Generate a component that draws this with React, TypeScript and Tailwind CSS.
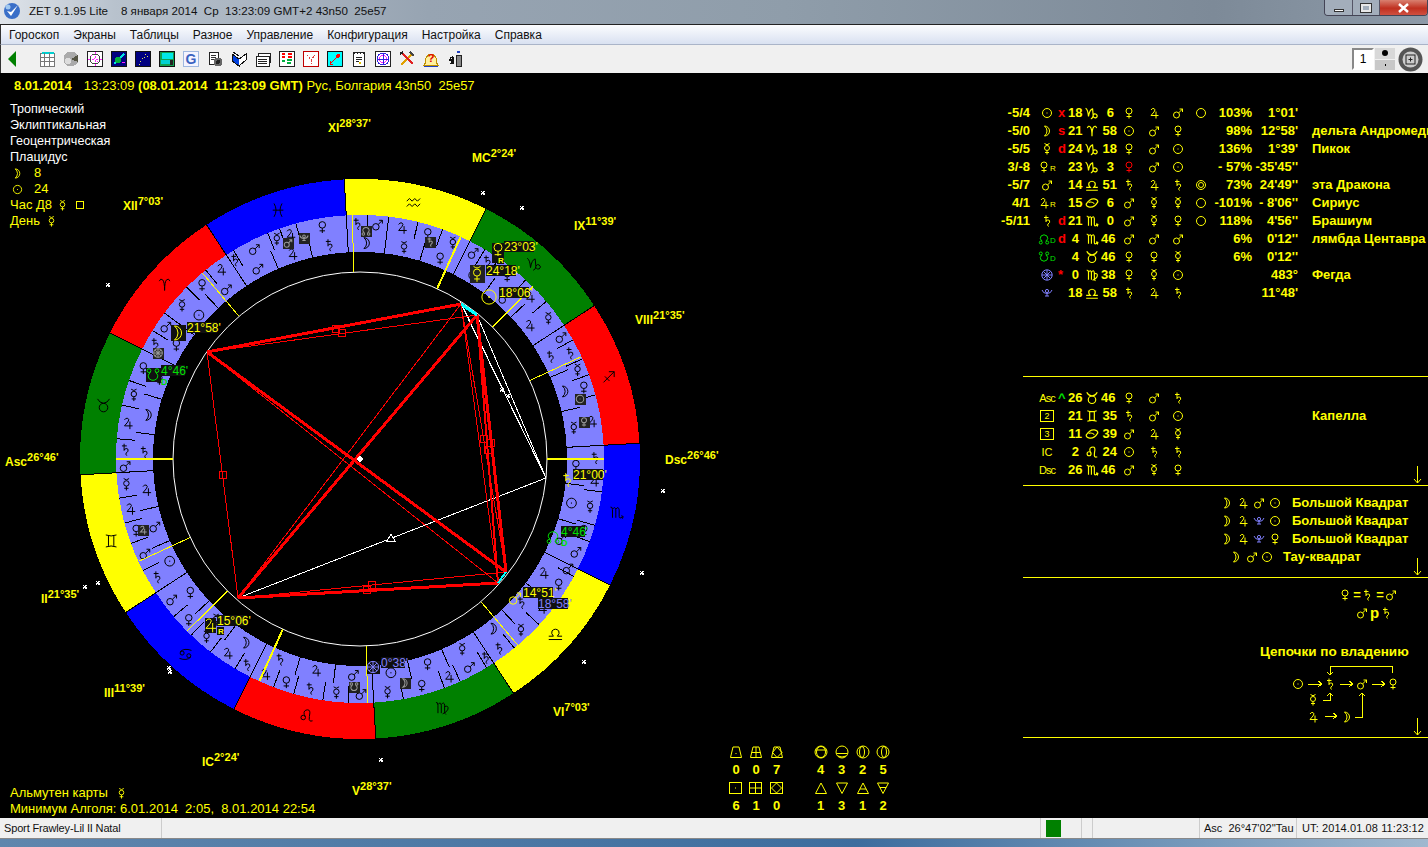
import type { ReactNode } from "react";

// Стилизованные символы планет и знаков (viewBox 12x12)
const PATHS: Record<string, ReactNode> = {
  sun: <><circle cx="6" cy="6" r="4.5" /><rect x="5.5" y="5.5" width="1" height="1" fill="currentColor" stroke="none" /></>,
  moon: <path d="M3.5 1 A5 5 0 0 1 3.5 11 A6.5 6.5 0 0 0 6 6 A6.5 6.5 0 0 0 3.5 1Z" />,
  mer: <><circle cx="6" cy="5" r="2.5" /><path d="M3.5 .5Q6 3 8.5 .5M6 7.5V11.5M4 9.5H8" /></>,
  ven: <><circle cx="6" cy="4" r="3" /><path d="M6 7V11.5M3.5 9.5H8.5" /></>,
  mar: <><circle cx="4.5" cy="8" r="3" /><path d="M6.7 5.8L10.5 2M7.5 2H10.5V5" /></>,
  jup: <path d="M3 3Q4 1 6 1.5Q8 2.5 6 5L3 8.5H10.5M8 4.5V11.5" />,
  sat: <path d="M5 .5V7M3 2.5H7.5M5 6Q7 4 8.5 5.5Q9.5 7.5 7 9Q6 10 7.5 11.5" />,
  nn: <><path d="M4 8Q1 6 3 3Q6 .5 9 3Q11 6 8 8" /><circle cx="2.8" cy="9.5" r="1.5" /><circle cx="9.2" cy="9.5" r="1.5" /></>,
  sn: <><path d="M4 4Q1 6 3 9Q6 11.5 9 9Q11 6 8 4" /><circle cx="2.8" cy="2.5" r="1.5" /><circle cx="9.2" cy="2.5" r="1.5" /></>,
  lil: <><circle cx="6" cy="4" r="1.6" /><path d="M1 3Q2 6.5 6 6.5Q10 6.5 11 3M6 6.5V9M4 9H8" /></>,
  for: <><circle cx="6" cy="6" r="5.2" /><path d="M2.4 2.4L9.6 9.6M9.6 2.4L2.4 9.6M6 1V11M1 6H11" /></>,
  ari: <path d="M2 3.5Q3 1 4.5 2.5Q6 4 6 10.5Q6 4 7.5 2.5Q9 1 10 3.5" />,
  tau: <><circle cx="6" cy="7.5" r="3.2" /><path d="M1.5 1Q3 4 6 4.3Q9 4 10.5 1" /></>,
  gem: <path d="M2 1.5Q6 3 10 1.5M2 10.5Q6 9 10 10.5M4 2.3V9.7M8 2.3V9.7" />,
  can: <><path d="M2 4Q5 1 10.5 3M10 8Q7 11 1.5 9" /><circle cx="3.5" cy="5" r="1.5" /><circle cx="8.5" cy="7" r="1.5" /></>,
  eye: <><path d="M1 7Q4 2 8 2.500Q11 3 11 5Q8 10 4 9.500Q1 9 1 7Z" /><path d="M3 5.500Q6 4.500 8 6.500" /></>,
  leo: <><circle cx="3.5" cy="7.5" r="1.7" /><path d="M5 7Q3 3 5.5 2Q8.5 1 8.5 4Q8 7 8 9Q8.5 11 10.5 10" /></>,
  vir: <path d="M1.5 2Q3 1.5 3 4V10M3 3.5Q5 1 5.5 4V10M5.5 3.5Q7.5 1 8 4V9Q8 10.5 9 11M8 5Q11 4 10.5 7Q10 9 6.5 10.5" />,
  lib: <path d="M1 10.5H11M1 8H4.5Q2.5 6 3.5 4Q6 1.5 8.5 4Q9.5 6 7.5 8H11" />,
  sco: <path d="M1.5 2Q3 1.5 3 4V10M3 3.5Q5 1 5.5 4V10M5.5 3.5Q7.5 1 8 4V9Q8 11 10.5 9.5M9.5 8.5L11 9L10.5 10.7" />,
  sag: <path d="M2 10L10 2M6 2H10V6M3 5.5L6.5 9" />,
  cap: <path d="M.5 2Q2.500 3 3 9Q4 3 6.500 2.500L7 8Q7 10.500 5 11M7 8Q8 6 9.500 7Q11.500 8.500 9.500 10Q8 10.500 7 9" />,
  aqu: <path d="M1 5L3 3L5 5L7 3L9 5L11 3M1 9L3 7L5 9L7 7L9 9L11 7" />,
  pis: <path d="M3 1Q6 6 3 11M9 1Q6 6 9 11M2 6H10" />,
};

const SIGNS = ["ari", "tau", "gem", "can", "leo", "vir", "lib", "sco", "sag", "cap", "aqu", "pis"];
const SIGN_COLORS = ["#ff0000", "#008000", "#ffff00", "#0000ff"];
// Египетские термы: [планета, конец в градусах]
const TERMS: [string, number][][] = [
  [["jup", 6], ["ven", 12], ["mer", 20], ["mar", 25], ["sat", 30]],
  [["ven", 8], ["mer", 14], ["jup", 22], ["sat", 27], ["mar", 30]],
  [["mer", 6], ["jup", 12], ["ven", 17], ["mar", 24], ["sat", 30]],
  [["mar", 7], ["ven", 13], ["mer", 19], ["jup", 26], ["sat", 30]],
  [["jup", 6], ["ven", 11], ["sat", 18], ["mer", 24], ["mar", 30]],
  [["mer", 7], ["ven", 17], ["jup", 21], ["mar", 28], ["sat", 30]],
  [["sat", 6], ["mer", 14], ["jup", 21], ["ven", 28], ["mar", 30]],
  [["mar", 7], ["ven", 11], ["mer", 19], ["jup", 24], ["sat", 30]],
  [["jup", 12], ["ven", 17], ["mer", 21], ["sat", 26], ["mar", 30]],
  [["mer", 7], ["jup", 14], ["ven", 22], ["sat", 26], ["mar", 30]],
  [["mer", 7], ["ven", 13], ["jup", 20], ["mar", 25], ["sat", 30]],
  [["ven", 12], ["jup", 16], ["mer", 19], ["mar", 28], ["sat", 30]],
];
const DECANS = ["mar", "sun", "ven", "mer", "moon", "sat", "jup"];

const Y = "#ffff00";
const ASC = 56.77;
const pt = (r: number, lon: number): [number, number] => {
  const a = ((180 + lon - ASC) * Math.PI) / 180;
  return [360 + r * Math.cos(a), 459 - r * Math.sin(a)];
};
const sector = (R: number, r: number, a: number, b: number) => {
  const [x1, y1] = pt(R, a), [x2, y2] = pt(R, b), [x3, y3] = pt(r, b), [x4, y4] = pt(r, a);
  return `M${x1} ${y1}A${R} ${R} 0 0 0 ${x2} ${y2}L${x3} ${y3}A${r} ${r} 0 0 1 ${x4} ${y4}Z`;
};

function G({ n, x, y, s = 12, c = "#000", w = 1 }: { n: string; x: number; y: number; s?: number; c?: string; w?: number }) {
  return (
    <g transform={`translate(${x - s / 2} ${y - s / 2}) scale(${s / 12})`} fill="none" stroke={c} color={c} strokeWidth={(w * 12) / s} shapeRendering="geometricPrecision">
      {PATHS[n]}
    </g>
  );
}
// Символ внутри HTML-разметки
function Sym({ n, c = Y, s = 12 }: { n: string; c?: string; s?: number }) {
  return (
    <svg width={s} height={s} viewBox="0 0 12 12" fill="none" stroke={c} color={c} className="shrink-0">
      {PATHS[n]}
    </svg>
  );
}

const CUSPS: [number, number][] = [[ASC, 2], [81.58, 1], [101.65, 1], [122.4, 2], [148.62, 1], [187.05, 1], [ASC + 180, 2], [261.58, 1], [281.65, 1], [302.4, 2], [328.62, 1], [7.05, 1]];
const CUSP_LABELS: [string, string, number, number][] = [
  ["XI", "28°37'", 328, 132], ["MC", "2°24'", 472, 162], ["XII", "7°03'", 123, 210], ["IX", "11°39'", 574, 230], ["VIII", "21°35'", 635, 324],
  ["Asc", "26°46'", 5, 466], ["Dsc", "26°46'", 665, 464], ["II", "21°35'", 41, 603], ["VI", "7°03'", 553, 716], ["III", "11°39'", 104, 697], ["IC", "2°24'", 202, 766], ["V", "28°37'", 352, 795],
];
const STARS: [number, number][] = [[483, 193], [522, 208], [108, 285], [85, 587], [98, 583], [169, 668], [170, 672], [642, 573], [584, 662], [663, 491], [381, 760]];
const DARK_BOXES: [string, number, number][] = [["nn", 366, 231], ["sat", 430, 242], ["sun", 580, 399], ["ven", 584, 422], ["mar", 288, 243], ["lil", 304, 238], ["for", 158, 353], ["jup", 143, 530], ["sn", 354, 687], ["moon", 405, 683]];
const Mo: [number, number] = [207, 352], Ve: [number, number] = [461, 304], Me: [number, number] = [460, 301], Su: [number, number] = [477, 315], Ma: [number, number] = [498, 583], Li: [number, number] = [506, 572], Ju: [number, number] = [238, 598], Sa: [number, number] = [546, 478];
const RED_LINES: [[number, number], [number, number], number][] = [
  [Mo, Ve, 3], [Mo, Su, 1], [Mo, Li, 3], [Mo, Ma, 1], [Ju, Su, 3], [Ju, Ve, 1], [Mo, Ju, 1], [Ju, Ma, 3], [Ju, Li, 1], [Su, Li, 3], [Su, Ma, 2], [Ve, Ma, 1], [Ve, Li, 1],
];
const WHITE_LINES: [[number, number], [number, number], number][] = [[Sa, Ju, 1], [Sa, Ve, 1], [Sa, Su, 1], [Sa, Me, 1]];
const SQUARES: [number, number][] = [[336, 329], [342, 333], [223, 475], [367, 590], [372, 585], [484, 439], [488, 450], [491, 443]];

function Label({ x, y, text, c = Y, w = 30 }: { x: number; y: number; text: string; c?: string; w?: number }) {
  return (
    <>
      <rect x={x} y={y - 10} width={w} height={11} fill="#101010" />
      <text x={x} y={y} fill={c} fontSize="12">{text}</text>
    </>
  );
}
function Star({ x, y }: { x: number; y: number }) {
  return <path d={`M${x - 2} ${y}H${x + 2}M${x} ${y - 2}V${y + 2}M${x - 2} ${y - 2}L${x + 2} ${y + 2}M${x + 2} ${y - 2}L${x - 2} ${y + 2}`} stroke="#fff" />;
}

function Chart() {
  const ticks: [number, number, number][] = [];
  const marks: [string, number, number][] = [];
  SIGNS.forEach((_, i) => {
    let from = 0;
    TERMS[i].forEach(([p, to]) => {
      const [x, y] = pt(235, i * 30 + (from + to) / 2);
      marks.push([p, x, y]);
      if (to < 30) ticks.push([226, 244, i * 30 + to]);
      from = to;
    });
    for (let d = 0; d < 3; d++) {
      const [x, y] = pt(216, i * 30 + d * 10 + 5);
      marks.push([DECANS[(i * 3 + d) % 7], x, y]);
      if (d > 0) ticks.push([207, 226, i * 30 + d * 10]);
    }
  });
  return (
    <svg className="absolute inset-0" width="1428" height="745" viewBox="0 73 1428 745" shapeRendering="crispEdges">
      {SIGNS.map((n, i) => {
        const [x, y] = pt(262, i * 30 + 15);
        return (
          <g key={n}>
            <path d={sector(280, 244, i * 30, i * 30 + 30)} fill={SIGN_COLORS[i % 4]} />
            <path d={sector(244, 207, i * 30, i * 30 + 30)} fill="#8080ff" />
            <G n={n} x={x} y={y} s={16} />
          </g>
        );
      })}
      {SIGNS.map((_, i) => {
        const [a, b] = pt(207, i * 30), [c, d] = pt(280, i * 30);
        return <line key={i} x1={a} y1={b} x2={c} y2={d} stroke="#000" />;
      })}
      {ticks.map(([r1, r2, l], i) => {
        const [a, b] = pt(r1, l), [c, d] = pt(r2, l);
        return <line key={i} x1={a} y1={b} x2={c} y2={d} stroke="#000" />;
      })}
      {marks.map(([n, x, y], i) => <G key={i} n={n} x={x} y={y} s={13} />)}
      {DARK_BOXES.map(([n, x, y], i) => (
        <g key={i}>
          <rect x={x - 5} y={y - 5} width="11" height="11" fill="#222" />
          <G n={n} x={x} y={y} s={10} c="#999" />
        </g>
      ))}
      <circle cx="360" cy="459" r="187" fill="#000" stroke="#fff" shapeRendering="geometricPrecision" />
      {CUSPS.map(([l, w], i) => {
        const [a, b] = pt(187, l), [c, d] = pt(244, l);
        return <line key={i} x1={a} y1={b} x2={c} y2={d} stroke={Y} strokeWidth={w} />;
      })}
      {WHITE_LINES.map(([a, b, w], i) => <line key={i} x1={a[0]} y1={a[1]} x2={b[0]} y2={b[1]} stroke="#fff" strokeWidth={w} />)}
      {RED_LINES.map(([a, b, w], i) => <line key={i} x1={a[0]} y1={a[1]} x2={b[0]} y2={b[1]} stroke="#ff0000" strokeWidth={w} />)}
      <line x1={Ve[0]} y1={Ve[1]} x2={Su[0]} y2={Su[1]} stroke="#00ffff" strokeWidth="3" />
      <line x1={Ma[0]} y1={Ma[1]} x2={Li[0]} y2={Li[1]} stroke="#00ffff" strokeWidth="2" />
      {SQUARES.map(([x, y], i) => <rect key={i} x={x - 3.5} y={y - 3.5} width="7" height="7" fill="none" stroke="#ff0000" />)}
      <path d="M391 534L395 541H387Z" fill="#000" stroke="#fff" />
      <Star x={502} y={390} /><Star x={508} y={396} />
      <path d="M360 455.500L363.500 459L360 462.500L356.500 459Z" fill="#fff" />
      {STARS.map(([x, y], i) => <Star key={i} x={x} y={y} />)}

      {/* Планеты на круге */}
      <rect x="492" y="243" width="12" height="20" fill="#101010" /><G n="ven" x={498} y={250} s={16} c={Y} />
      <Label x={504} y={251} text="23°03'" />
      <rect x="497" y="256" width="7" height="8" fill="#101010" /><text x="498" y="263" fontSize="8" fontWeight="700" fill={Y}>R</text>
      <rect x="470" y="265" width="15" height="18" fill="#222" /><G n="mer" x={477} y={274} s={17} c={Y} />
      <Label x={486} y={275} text="24°18'" />
      <G n="sun" x={489} y={297} s={19} c={Y} />
      <Label x={499} y={297} text="18°06'" />
      <rect x="171" y="325" width="15" height="16" fill="#101010" /><G n="moon" x={178} y={333} s={17} c={Y} />
      <Label x={187} y={332} text="21°58'" />
      <rect x="146" y="368" width="15" height="14" fill="#101010" /><G n="sn" x={153} y={375} s={15} c="#00e000" />
      <Label x={161} y={375} text="4°46'" c="#00e000" w={24} />
      <text x="161" y="385" fontSize="9" fontWeight="700" fill="#00e000">D</text>
      <rect x="205" y="618" width="11" height="15" fill="#101010" /><G n="jup" x={210} y={625} s={16} c={Y} />
      <Label x={217} y={625} text="15°06'" />
      <rect x="217" y="627" width="7" height="8" fill="#101010" /><text x="218" y="634" fontSize="8" fontWeight="700" fill={Y}>R</text>
      <rect x="367" y="661" width="13" height="13" fill="#101010" /><G n="for" x={373} y={667} s={13} c="#8080ff" />
      <Label x={381} y={667} text="0°38'" c="#8080ff" w={24} />
      <G n="mar" x={515} y={598} s={15} c={Y} />
      <Label x={523} y={597} text="14°51'" />
      <Label x={538} y={608} text="18°58'" c="#8080ff" />
      <G n="nn" x={553} y={537} s={15} c="#00e000" />
      <Label x={561} y={536} text="4°46'" c="#00e000" w={24} />
      <text x="561" y="546" fontSize="9" fontWeight="700" fill="#00e000">D</text>
      <G n="sat" x={567} y={480} s={15} c={Y} />
      <Label x={573} y={479} text="21°00'" />

      {CUSP_LABELS.map(([a, b, x, y]) => (
        <text key={a} x={x} y={y} fill={Y} fontWeight="700" fontSize="12">
          {a}<tspan dy="-5" fontSize="11">{b}</tspan>
        </text>
      ))}
    </svg>
  );
}

// Таблица планет
type Row = { s?: string; p?: string; pc?: string; sub?: string; m?: string; d: string; z: string; mn: string; r?: string[]; ext?: string; pct?: string; t?: string; name?: string; lab?: ReactNode };
const ROWS: Row[] = [
  { s: "-5/4", p: "sun", m: "x", d: "18", z: "cap", mn: "6", r: ["ven", "jup", "mar"], ext: "ring", pct: "103%", t: "1°01'" },
  { s: "-5/0", p: "moon", m: "s", d: "21", z: "ari", mn: "58", r: ["sun", "mar", "ven"], pct: "98%", t: "12°58'", name: "дельта Андромеды" },
  { s: "-5/5", p: "mer", m: "d", d: "24", z: "cap", mn: "18", r: ["ven", "mar", "sun"], pct: "136%", t: "1°39'", name: "Пикок" },
  { s: "3/-8", p: "ven", sub: "R", d: "23", z: "cap", mn: "3", r: ["ven!", "mar", "sun"], pct: "- 57%", t: "-35'45''" },
  { s: "-5/7", p: "mar", d: "14", z: "lib", mn: "51", r: ["sat", "jup", "sat"], ext: "ring2", pct: "73%", t: "24'49''", name: "эта Дракона" },
  { s: "4/1", p: "jup", sub: "R", d: "15", z: "eye", mn: "6", r: ["mar", "mer", "mer"], ext: "ring", pct: "-101%", t: "- 8'06''", name: "Сириус" },
  { s: "-5/11", p: "sat", m: "d", d: "21", z: "sco", mn: "0", r: ["mar", "mer", "ven"], ext: "ring", pct: "118%", t: "4'56''", name: "Брашиум" },
  { p: "nn", pc: "#00e000", sub: "D", m: "d", d: "4", z: "sco", mn: "46", r: ["mar", "mar", "mar"], pct: "6%", t: "0'12''", name: "лямбда Центавра" },
  { p: "sn", pc: "#00e000", sub: "D", d: "4", z: "tau", mn: "46", r: ["ven", "ven", "mer"], pct: "6%", t: "0'12''" },
  { p: "for", pc: "#8080ff", m: "*", d: "0", z: "vir", mn: "38", r: ["ven", "mer", "sun"], t: "483°", name: "Фегда" },
  { p: "lil", pc: "#8080ff", d: "18", z: "lib", mn: "58", r: ["sat", "jup", "sat"], t: "11°48'" },
];
const HOUSES: Row[] = [
  { lab: <span className="text-[11px] font-normal tracking-[-1px]">Asc</span>, m: "^", d: "26", z: "tau", mn: "46", r: ["ven", "mar", "sat"] },
  { lab: <span className="border border-[#ffff00] px-[3px] text-[9px] leading-[10px] font-normal">2</span>, d: "21", z: "gem", mn: "35", r: ["sat", "mar", "sun"], name: "Капелла" },
  { lab: <span className="border border-[#ffff00] px-[3px] text-[9px] leading-[10px] font-normal">3</span>, d: "11", z: "eye", mn: "39", r: ["mar", "jup", "mer"] },
  { lab: <span className="text-[11px] font-normal">IC</span>, d: "2", z: "leo", mn: "24", r: ["sun", "sat", "sat"] },
  { lab: <span className="text-[11px] font-normal tracking-[-1px]">Dsc</span>, d: "26", z: "sco", mn: "46", r: ["mar", "mer", "ven"] },
];
const COLS = "grid h-[18px] grid-cols-[38px_20px_10px_14px_19px_16px_24px_25px_24px_22px_40px_46px_130px] items-center whitespace-nowrap text-[13px] leading-[18px] font-bold text-[#ffff00]";

function Ext({ k }: { k?: string }) {
  if (!k) return <span />;
  return (
    <svg width="12" height="12" viewBox="0 0 12 12" fill="none" stroke={Y} className="justify-self-center">
      <circle cx="6" cy="6" r="4.5" />
      {k === "ring2" && <circle cx="6" cy="6" r="2.5" />}
    </svg>
  );
}
function TableRow({ r }: { r: Row }) {
  const pick = (n: string) => (n.endsWith("!") ? <Sym n={n.slice(0, -1)} c="#ff0000" /> : <Sym n={n} />);
  return (
    <div className={COLS}>
      <span className="pr-2 text-right">{r.s}</span>
      <span className="flex items-center justify-center pr-[2px]">
        {r.lab ?? <Sym n={r.p ?? "sun"} c={r.pc} />}
        {r.sub && <span className={`text-[8px] leading-[8px] mt-1 font-normal ${r.pc ? "text-[#00e000]" : ""}`}>{r.sub}</span>}
      </span>
      <span className={r.m === "^" ? "text-[#00e000]" : "text-[#ff0000]"}>{r.m}</span>
      <span className={`text-right ${r.d.length === 1 ? "pr-[3px]" : ""}`}>{r.d}</span>
      <span className="flex justify-center pl-[1px]"><Sym n={r.z} s={14} /></span>
      <span className={`text-right ${r.mn.length === 1 || r.mn === "46" || r.mn === "38" ? "pr-[3px]" : ""}`}>{r.mn}</span>
      {(r.r ?? []).map((n, i) => <span key={i} className="flex justify-center">{pick(n)}</span>)}
      <Ext k={r.ext} />
      <span className="text-right">{r.pct}</span>
      <span className="text-right">{r.t}</span>
      <span className="overflow-hidden pl-[14px]">{r.name}</span>
    </div>
  );
}

function DownArrow() {
  return (
    <svg width="9" height="18" viewBox="0 0 9 18" fill="none" stroke={Y} className="absolute right-[6px] bottom-[1px]">
      <path d="M4.500 0V17M1 13L4.500 17L8 13" />
    </svg>
  );
}
const Rule = () => <div className="ml-[23px] h-px bg-[#ffff00]" />;

const CONFIGS: [string[], string][] = [
  [["moon", "jup", "mar", "sun"], "Большой Квадрат"],
  [["moon", "jup", "lil", "sun"], "Большой Квадрат"],
  [["moon", "jup", "lil", "ven"], "Большой Квадрат"],
];

function ChainDiagram() {
  return (
    <svg width="110" height="66" viewBox="1290 660 110 66" fill="none" stroke={Y} className="ml-[290px]" shapeRendering="crispEdges">
      <G n="sun" x={1298} y={683} c={Y} /><G n="sat" x={1330} y={683} c={Y} /><G n="mar" x={1362} y={683} c={Y} /><G n="ven" x={1393} y={683} c={Y} />
      <G n="mer" x={1313} y={699} c={Y} /><G n="jup" x={1313} y={716} c={Y} /><G n="moon" x={1347} y={716} c={Y} />
      <path d="M1308 683H1322M1318 680L1322 683L1318 686M1340 683H1353M1349 680L1353 683L1349 686M1372 683H1385M1381 680L1385 683L1381 686" />
      <path d="M1392 672V665H1330V674M1327 671L1330 674L1333 671" />
      <path d="M1323 699H1330V692M1327 695L1330 692L1333 695" />
      <path d="M1325 715H1337M1333 712L1337 715L1333 718" />
      <path d="M1355 716H1362V692M1359 695L1362 692L1365 695" />
    </svg>
  );
}

function RightPanel() {
  return (
    <div className="relative z-10 flex w-[428px] shrink-0 flex-col overflow-hidden">
      <div className="h-[303px] pt-[31px]">
        {ROWS.map((r, i) => <TableRow key={i} r={r} />)}
      </div>
      <Rule />
      <div className="relative h-[108px] pt-[12px]">
        {HOUSES.map((r, i) => <TableRow key={i} r={r} />)}
        <DownArrow />
      </div>
      <Rule />
      <div className="relative h-[91px] pt-[8px] text-[13px] leading-[18px] font-bold text-[#ffff00]">
        {CONFIGS.map(([g, t], i) => (
          <div key={i} className="grid h-[18px] grid-cols-[16px_16px_16px_16px_1fr] items-center pl-[219px]">
            {g.map((n, j) => <span key={j} className="flex justify-center"><Sym n={n} c={n === "lil" ? "#8080ff" : Y} /></span>)}
            <span className="pl-[9px]">{t}</span>
          </div>
        ))}
        <div className="grid h-[18px] grid-cols-[16px_15px_16px_1fr] items-center pl-[228px]">
          <span className="flex justify-center"><Sym n="moon" /></span>
          <span className="flex justify-center"><Sym n="mar" /></span>
          <span className="flex justify-center"><Sym n="sun" /></span>
          <span className="pl-[8px]">Тау-квадрат</span>
        </div>
        <DownArrow />
      </div>
      <Rule />
      <div className="relative h-[159px] pt-[8px] text-[13px] leading-[18px] font-bold text-[#ffff00]">
        <div className="flex h-[18px] items-center pl-[339px]">
          <Sym n="ven" /><span className="w-[10px] pl-[2px] text-center">=</span><Sym n="sat" /><span className="w-[12px] pl-[2px] text-center">=</span><Sym n="mar" />
        </div>
        <div className="flex h-[18px] items-center pl-[356px]">
          <Sym n="mar" /><span className="w-[12px] pl-[1px] text-center text-[15px]">p</span><Sym n="sat" />
        </div>
        <div className="mt-[21px] h-[18px] pl-[260px] text-[13.500px]">Цепочки по владению</div>
        <ChainDiagram />
        <DownArrow />
      </div>
      <Rule />
    </div>
  );
}

// Нижние счётчики: модальности и стихии
const qIcon = (shape: ReactNode) => (
  <svg width="14" height="14" viewBox="0 0 14 14" fill="none" stroke={Y}>{shape}</svg>
);
const TRAP = "M4 2H10L12.500 12.500H1.500Z";
const BOX = <rect x=".5" y="1.500" width="12" height="11" />;
const STATS_ROW1 = [
  qIcon(<><path d={TRAP} /><path d="M6.500 8.500H7.500" /></>),
  qIcon(<><path d={TRAP} /><path d="M7 2V12.500M2.500 7.500H11.500" /></>),
  qIcon(<><path d={TRAP} /><path d="M7 2L12 7.500L7 12.500L2.500 7.500Z" /></>),
  null,
  qIcon(<><circle cx="7" cy="7" r="6" /><ellipse cx="7" cy="7" rx="4.500" ry="5.500" /><path d="M1.500 5H12.500" /></>),
  qIcon(<><circle cx="7" cy="7" r="6" /><path d="M1.500 8.500H12.500M3 11Q7 13 11 11" /></>),
  qIcon(<><circle cx="7" cy="7" r="6" /><ellipse cx="6" cy="7" rx="2.500" ry="5.500" /></>),
  qIcon(<><circle cx="7" cy="7" r="6" /><ellipse cx="8" cy="7" rx="2.500" ry="5.500" /></>),
];
const STATS_ROW2 = [
  qIcon(<>{BOX}<path d="M6 7H7" /></>),
  qIcon(<>{BOX}<path d="M6.500 1.500V12.500M.5 7H12.500" /></>),
  qIcon(<>{BOX}<path d="M6.500 2L11.500 7L6.500 12L1.500 7Z" /></>),
  null,
  qIcon(<path d="M7 2L12.500 12.500H1.500Z" />),
  qIcon(<path d="M1.500 2H12.500L7 12.500Z" />),
  qIcon(<path d="M7 2L12.500 12.500H1.500ZM4 8H10" />),
  qIcon(<path d="M1.500 2H12.500L7 12.500ZM4 6.500H10" />),
];
function StatsGrid() {
  const cell = (v: ReactNode, i: number) => <span key={i} className="flex h-[18px] items-center justify-center">{v}</span>;
  return (
    <div className="mr-[107px] mb-[3px] grid grid-cols-[20px_20px_21px_23px_21px_21px_21px_20px] text-[13px] leading-[18px] font-bold text-[#ffff00]">
      {STATS_ROW1.map(cell)}
      {["0", "0", "7", "", "4", "3", "2", "5"].map(cell)}
      {STATS_ROW2.map(cell)}
      {["6", "1", "0", "", "1", "3", "1", "2"].map(cell)}
    </div>
  );
}

function LeftPanel() {
  return (
    <div className="relative z-10 flex w-[1000px] shrink-0 flex-col text-[13px] leading-[16px] text-[#ffff00]">
      <div className="h-[27px] whitespace-pre pt-[5px] pl-[14px]">
        <b>8.01.2014</b><span className="ml-[12px]">13:23:09 </span><b>{"(08.01.2014  11:23:09 GMT)"}</b>{" Рус, Болгария 43n50  25e57"}
      </div>
      <div className="pt-px pl-[10px]">
        {["Тропический", "Эклиптикальная", "Геоцентрическая", "Плацидус"].map((t) => <div key={t} className="text-[12.600px] text-white">{t}</div>)}
        <div className="flex h-[16px] items-center pl-[2px]"><Sym n="moon" s={11} /><span className="pl-[11px]">8</span></div>
        <div className="flex h-[16px] items-center pl-[2px]"><Sym n="sun" s={11} /><span className="pl-[11px]">24</span></div>
        <div className="flex h-[16px] items-center">Час Д8<span className="pl-[5px]"><Sym n="mer" s={11} /></span><span className="ml-[8px] h-[8px] w-[8px] border border-[#ffff00]" /></div>
        <div className="flex h-[16px] items-center">День<span className="pl-[6px]"><Sym n="mer" s={11} /></span></div>
      </div>
      <div className="mt-auto flex items-end justify-between">
        <div className="pb-[1px] pl-[10px] whitespace-pre">
          <div className="flex items-center">Альмутен карты<span className="pl-[8px]"><Sym n="mer" s={11} /></span></div>
          <div>{"Минимум Алголя: 6.01.2014  2:05,  8.01.2014 22:54"}</div>
        </div>
        <StatsGrid />
      </div>
    </div>
  );
}

// Иконки панели инструментов
const TOOL_ICONS: ReactNode[] = [
  <><rect x="1" y="2" width="14" height="13" fill="#fff" stroke="#777" /><rect x="3" y="1" width="12" height="2" fill="#00d0d0" /><path d="M1 6H15M1 10H15M5 2V15M10 2V15" stroke="#777" /></>,
  <><circle cx="8" cy="8" r="7.500" fill="#aaa" /><path d="M8 8L15 4V11Z" fill="#554" /><circle cx="5" cy="10" r="3" fill="#ddd" /></>,
  <><rect x=".5" y=".5" width="15" height="15" fill="#fff" stroke="#222" /><circle cx="8" cy="8" r="5" fill="none" stroke="#444" /><path d="M1 8H15M8 1V15M4 4L12 12" stroke="#ff20ff" strokeDasharray="2 2" /></>,
  <><rect x=".5" y=".5" width="15" height="15" fill="#000080" stroke="#111" /><path d="M3 13L13 3" stroke="#00e0e0" strokeWidth="2" /><circle cx="7" cy="9" r="3" fill="#00b040" /><path d="M11 11H14" stroke="#ff20ff" /></>,
  <><rect x=".5" y=".5" width="15" height="15" fill="#000080" stroke="#111" /><path d="M10 3H11M12 5H13M7 7H8M5 10H6M4 13H5M9 6H10" stroke="#e0e060" /></>,
  <><rect x=".5" y=".5" width="15" height="15" fill="#10a050" stroke="#111" /><rect x="3" y="2" width="11" height="6" fill="#00e8e8" /><rect x="2" y="9" width="9" height="4" fill="#00d0d0" /><rect x="11" y="9" width="3" height="5" fill="#222" /></>,
  <><rect x=".5" y=".5" width="15" height="15" fill="#f4f4ff" stroke="#a0b8e0" /><text x="8" y="13" textAnchor="middle" fontSize="14" fontWeight="700" fill="#3a62c0" stroke="none">G</text></>,
  <><path d="M2 1H11V13H2Z" fill="#fff" stroke="#222" /><path d="M4 4H9M4 6H9M4 8H7" stroke="#333" /><circle cx="11" cy="11" r="4.500" fill="#666" /><circle cx="11" cy="11" r="2" fill="#222" /></>,
  <><path d="M1 3L8 8L8 15L1 10Z" fill="#0040e0" stroke="#111" /><path d="M8 8L15 3V9L8 15" fill="#fff" stroke="#111" /><path d="M2 1L8 5" stroke="#111" /></>,
  <><rect x="3" y="2" width="12" height="9" fill="#fff" stroke="#222" /><rect x="1" y="5" width="13" height="10" fill="#fff" stroke="#222" /><path d="M3 8H12M3 10H12M3 12H12" stroke="#222" /></>,
  <><rect x=".5" y=".5" width="15" height="15" fill="#fff" stroke="#222" /><path d="M3 3H6M3 6H6M9 3H13M9 6H13" stroke="#ff0000" strokeWidth="2" /><path d="M3 10H6M8 9H13M8 12H12" stroke="#00b040" strokeWidth="2" /></>,
  <><rect x=".5" y=".5" width="15" height="15" fill="#fff" stroke="#c00000" /><path d="M4 4L8 9L12 4M8 9V13" stroke="#e04040" strokeDasharray="2 1" /></>,
  <><rect x=".5" y=".5" width="15" height="15" fill="#00ffff" stroke="#111" /><path d="M3 13L10 6" stroke="#ff0000" /><circle cx="11" cy="5" r="2" fill="#ff0000" /><path d="M3 10V13H6" stroke="#ff0000" /></>,
  <><rect x="2.500" y="1.500" width="11" height="14" fill="#fff" stroke="#222" /><path d="M3 1V3M6 1V3M9 1V3M12 1V3" stroke="#222" /><path d="M5 6H11M5 8H11M5 10H8" stroke="#222" /><circle cx="9" cy="12" r="1.500" fill="#e0c000" /></>,
  <><rect x=".5" y=".5" width="15" height="15" fill="#fff" stroke="#222" /><circle cx="8" cy="8" r="6" fill="none" stroke="#3020e0" /><circle cx="8" cy="8" r="3.500" fill="none" stroke="#ff20ff" /><path d="M2 8H14M8 2V14" stroke="#3020e0" /></>,
  <><path d="M2 14L13 3" stroke="#e0a000" strokeWidth="2" /><path d="M3 2L14 13" stroke="#e02020" strokeWidth="2" /><path d="M11 1L15 5" stroke="#444" strokeWidth="2" /><path d="M1 3L4 1" stroke="#222" strokeWidth="2" /></>,
  <><path d="M1 14Q3 12 3 7Q8 -1 13 7Q13 12 15 14Z" fill="#fff0a0" stroke="#c09000" /><path d="M1 15H15" stroke="#2040c0" /><text x="8" y="11" textAnchor="middle" fontSize="11" fontWeight="700" fill="#e00000" stroke="none">?</text></>,
  <><rect x="9" y="4" width="5" height="11" fill="#888" stroke="#222" /><rect x="10" y="0" width="3" height="2" fill="#2040c0" /><path d="M2 9H6M6 6V13M6 9L4 13M6 6L3 7" stroke="#111" strokeWidth="1.500" /></>,
];

function Toolbar() {
  return (
    <div className="flex h-[28px] shrink-0 items-center border-l border-[#333] bg-[#f0f0f0] pl-[7px]">
      <svg width="8" height="16" viewBox="0 0 8 16" className="mr-[23px]"><path d="M8 0V16L0 8Z" fill="#008000" /></svg>
      <div className="flex gap-[8px]">
        {TOOL_ICONS.map((ic, i) => <svg key={i} width="16" height="16" viewBox="0 0 16 16" fill="none" shapeRendering="crispEdges">{ic}</svg>)}
      </div>
      <div className="ml-auto flex items-center pr-[5px]">
        <div className="flex h-[22px] w-[22px] items-center justify-center border-2 border-t-[#888] border-r-white border-b-white border-l-[#888] bg-white text-[12px] text-black">1</div>
        <div className="ml-[1px] flex h-[22px] w-[20px] flex-col gap-px">
          <span className="flex flex-1 items-center justify-center bg-[#d8d8d8]"><i className="h-[6px] w-[6px] rounded-full bg-black" /></span>
          <span className="flex flex-1 items-center justify-center bg-[#c8c8c8]"><i className="h-[2px] w-px bg-black" /></span>
        </div>
        <svg width="25" height="25" viewBox="0 0 25 25" className="ml-[3px]">
          <circle cx="12.500" cy="12.500" r="12" fill="#555" /><circle cx="12.500" cy="12.500" r="8" fill="#ccc" />
          <rect x="8" y="8" width="9" height="9" fill="none" stroke="#222" /><path d="M12.500 10.500V14.500M10.500 12.500H14.500" stroke="#222" />
        </svg>
      </div>
    </div>
  );
}

function TitleBar() {
  return (
    <div className="flex h-[25px] shrink-0 items-start border-b border-[#222] bg-[linear-gradient(90deg,#dfe4ea_0%,#b8c2cd_8%,#97a4b2_30%,#8f9daa_55%,#7d8a98_85%,#8d9aa8_100%)]">
      <svg width="18" height="18" viewBox="0 0 18 18" className="mt-[2px] ml-[3px]">
        <circle cx="9" cy="9" r="8" fill="#3a6fc8" /><path d="M4 9L8 14L15 3L8 10Z" fill="#fff" /><circle cx="5" cy="5" r="2.500" fill="#a0c8f0" />
      </svg>
      <span className="whitespace-pre pt-[3px] pl-[8px] text-[11.600px] leading-[16px] text-[#111]">{"ZET 9.1.95 Lite    8 января 2014  Ср  13:23:09 GMT+2 43n50  25e57"}</span>
      <div className="ml-auto flex h-[16px] w-[104px] overflow-hidden rounded-b-[4px] border border-t-0 border-[#445]">
        <span className="flex w-[28px] items-end justify-center border-r border-[#556] bg-[#a3aebb] pb-[3px]"><i className="h-[3px] w-[10px] border border-[#333] bg-white" /></span>
        <span className="flex w-[27px] items-center justify-center border-r border-[#556] bg-[#a3aebb]"><i className="h-[8px] w-[10px] border-2 border-[#e8e8e8] outline-1 outline-[#333]" /></span>
        <span className="flex flex-1 items-center justify-center bg-[linear-gradient(#d98070,#c03020_55%,#d05040)]">
          <svg width="13" height="10" viewBox="0 0 13 10"><path d="M2 1L11 9M11 1L2 9" stroke="#fff" strokeWidth="2.500" /></svg>
        </span>
      </div>
    </div>
  );
}

function StatusBar() {
  return (
    <div className="flex h-[21px] shrink-0 items-center border-b border-[#888] bg-[#f0f0f0] text-[11px] text-[#111]">
      <span className="w-[161px] pl-[4px] tracking-[-0.15px]">Sport Frawley-Lil II Natal</span>
      <span className="h-full w-[879px] border-l border-[#ccc]" />
      <span className="flex h-full w-[41px] items-center border-l border-[#ccc] pl-[5px]"><i className="h-[17px] w-[15px] bg-[#008000]" /></span>
      <span className="h-full w-[11px] border-l border-[#ccc]" />
      <span className="h-full w-[107px] border-l border-[#ccc]" />
      <span className="flex h-full w-[97px] items-center border-l border-[#ccc] pl-[4px] whitespace-nowrap">Asc&nbsp; 26°47'02''Tau</span>
      <span className="flex h-full flex-1 items-center border-l border-[#ccc] pl-[5px] whitespace-nowrap tracking-[0.1px]">UT: 2014.01.08 11:23:12</span>
    </div>
  );
}

export default function App() {
  return (
    <div className="flex h-[847px] w-[1428px] flex-col overflow-hidden bg-black font-['Liberation_Sans',Arial,sans-serif]">
      <TitleBar />
      <div className="flex h-[20px] shrink-0 items-center gap-[14px] border-b border-l border-[#aab4c8] border-l-[#333] bg-[linear-gradient(#fbfcfe,#d9e1f1)] pl-[8px] text-[12px] text-[#111]">
        {["Гороскоп", "Экраны", "Таблицы", "Разное", "Управление", "Конфигурация", "Настройка", "Справка"].map((m) => <span key={m}>{m}</span>)}
      </div>
      <Toolbar />
      <div className="relative flex h-[745px] shrink-0">
        <Chart />
        <LeftPanel />
        <RightPanel />
      </div>
      <StatusBar />
      <div className="flex-1 bg-[linear-gradient(90deg,#5f86ad,#3d6d9e_60%,#9fb8cf)]" />
    </div>
  );
}
